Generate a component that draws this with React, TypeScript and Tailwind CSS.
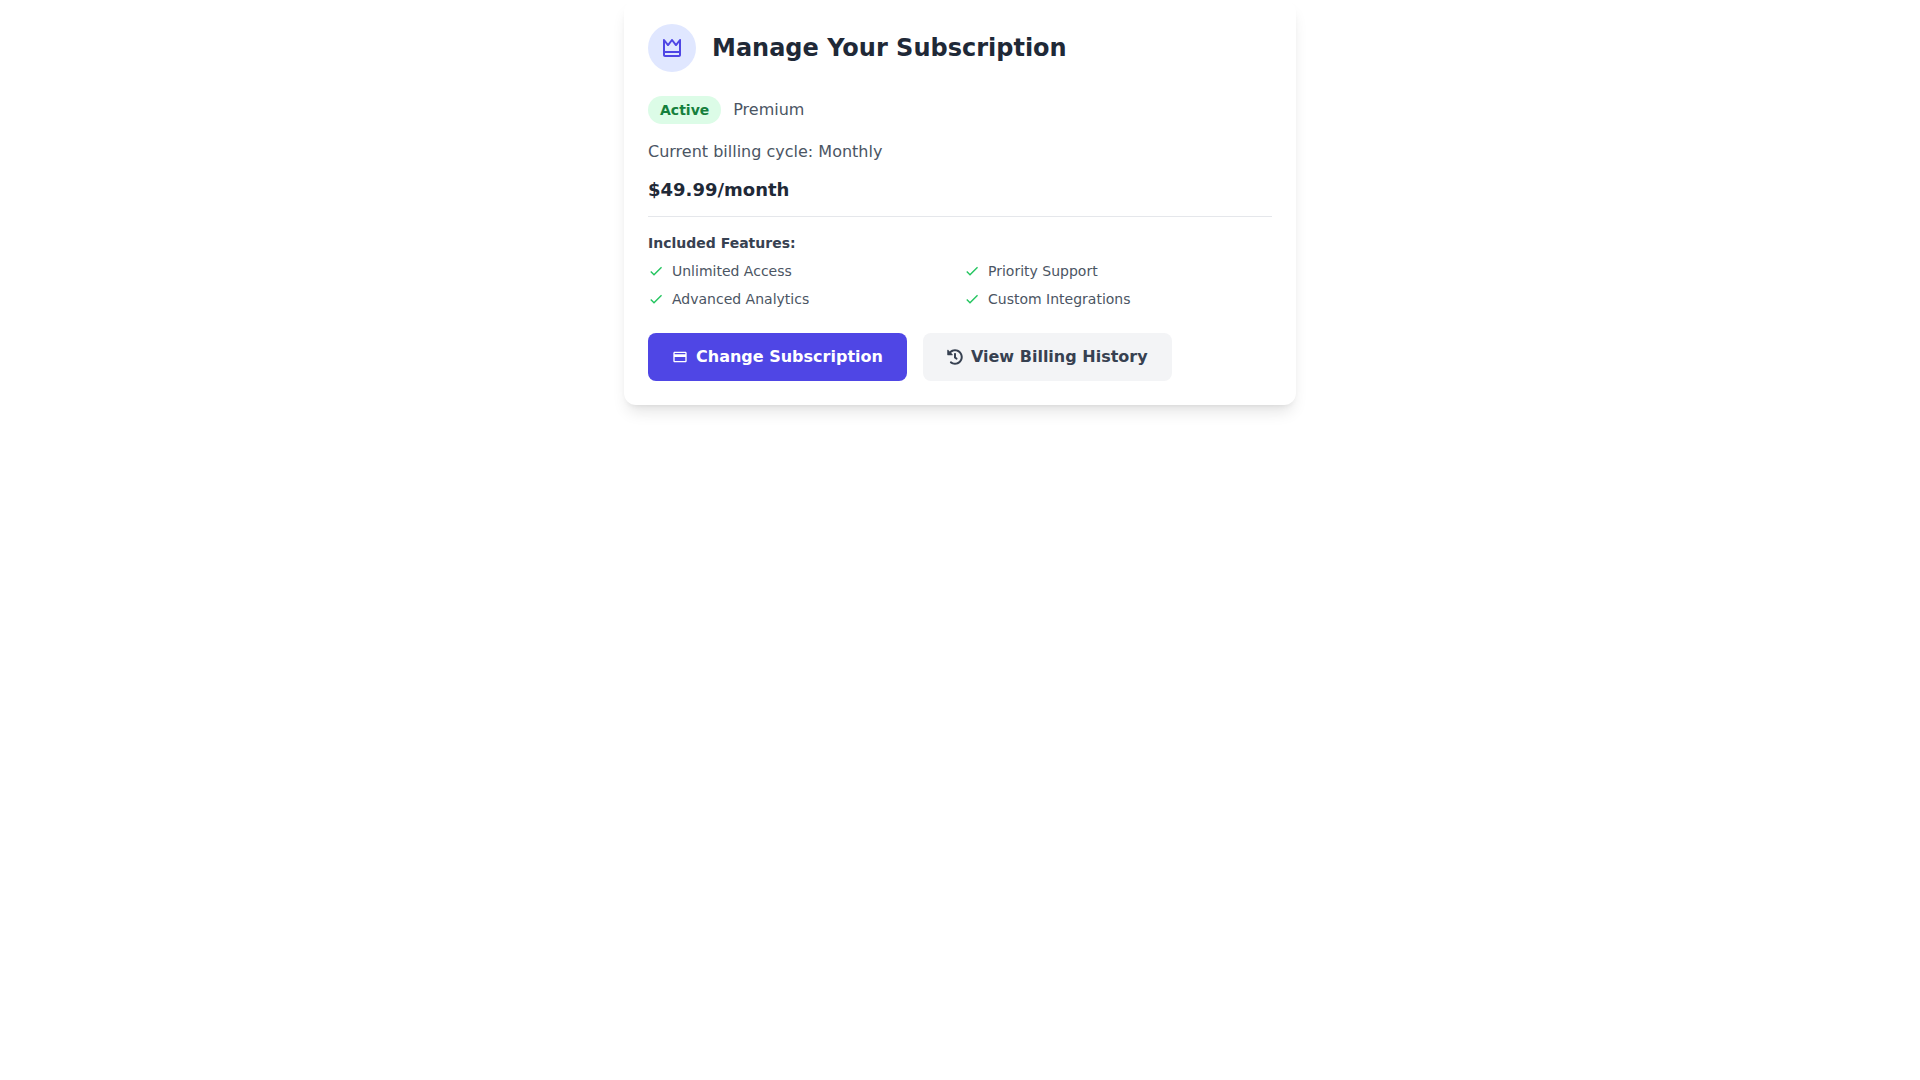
import { BiCrown } from "react-icons/bi";
import { FaHistory } from "react-icons/fa";
import { MdCheck, MdCreditCard } from "react-icons/md";

const subscription = {
  status: "Active",
  plan: "Premium",
  cycle: "Monthly",
  price: "$49.99/month",
  features: ["Unlimited Access", "Priority Support", "Advanced Analytics", "Custom Integrations"],
};

export default function App() {
  return (
    <div className="min-h-screen bg-white font-['DejaVu_Sans',sans-serif]">
      <main className="max-w-2xl mx-auto bg-white rounded-xl shadow-lg p-6">
        <div className="flex items-center mb-6">
          <div className="w-12 h-12 rounded-full bg-[#e0e7ff] flex items-center justify-center mr-4">
            <BiCrown className="w-6 h-6 text-[#4f46e5]" />
          </div>
          <h1 className="text-2xl font-bold text-[#1f2937]">Manage Your Subscription</h1>
        </div>

        <div className="flex items-center mb-4">
          <span className="bg-[#dcfce7] text-[#15803d] text-sm font-semibold px-3 py-1 rounded-full">
            {subscription.status}
          </span>
          <span className="ml-3 text-[#4b5563]">{subscription.plan}</span>
        </div>

        <div className="border-b border-[#e5e7eb] pb-3 mb-4">
          <p className="text-[#4b5563] mb-3">Current billing cycle: {subscription.cycle}</p>
          <p className="text-lg font-bold text-[#1f2937]">{subscription.price}</p>
        </div>

        <section className="mb-6">
          <h2 className="text-sm font-semibold text-[#374151] mb-2">Included Features:</h2>
          <ul className="grid grid-cols-1 sm:grid-cols-2 gap-2">
            {subscription.features.map((feature) => (
              <li key={feature} className="flex items-center text-sm text-[#4b5563]">
                <MdCheck className="w-4 h-4 mr-2 text-[#22c55e]" />
                {feature}
              </li>
            ))}
          </ul>
        </section>

        <div className="flex flex-col sm:flex-row gap-4">
          <button
            type="button"
            className="flex items-center justify-center px-6 py-3 rounded-lg bg-[#4f46e5] text-white font-semibold hover:bg-[#4338ca]"
          >
            <MdCreditCard className="w-4 h-4 mr-2" />
            Change Subscription
          </button>
          <button
            type="button"
            className="flex items-center justify-center px-6 py-3 rounded-lg bg-[#f3f4f6] text-[#374151] font-semibold hover:bg-[#e5e7eb]"
          >
            <FaHistory className="w-4 h-4 mr-2" />
            View Billing History
          </button>
        </div>
      </main>
    </div>
  );
}
